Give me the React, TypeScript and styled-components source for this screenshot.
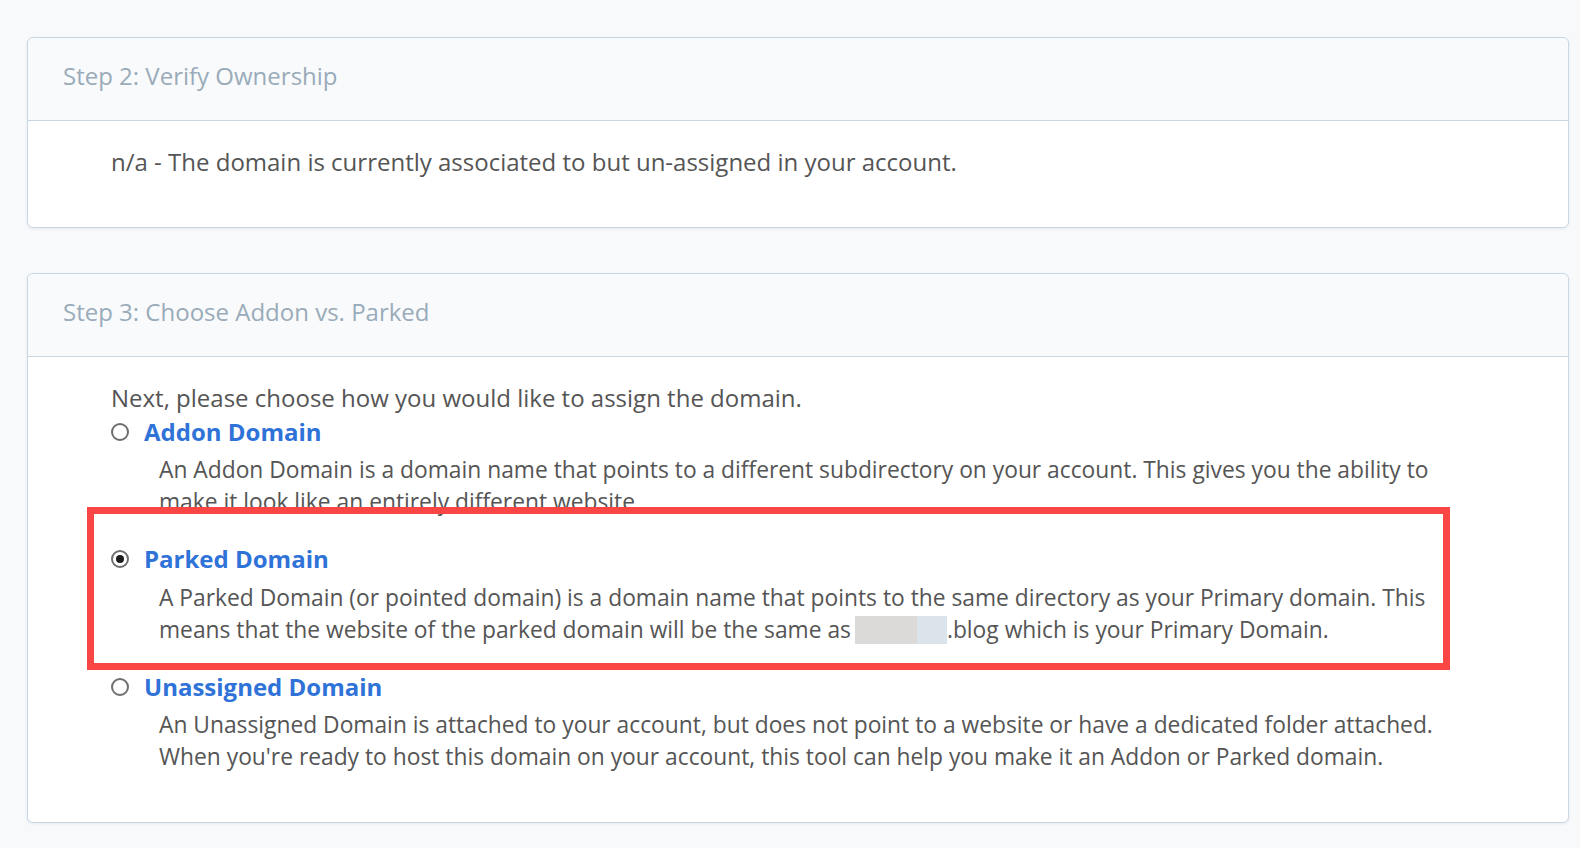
import React from 'react'
import styled, { createGlobalStyle } from 'styled-components'

const GlobalStyle = createGlobalStyle`
  html, body {
    margin: 0;
    padding: 0;
    background: #f7f9fb;
  }
  body {
    font-family: 'Open Sans', 'Liberation Sans', sans-serif;
    color: #555555;
  }
`

const Page = styled('div')`
  padding: 37px 11px 27px 27px;
`

const Card = styled('section')`
  background: #ffffff;
  border: 1px solid #c9d6e3;
  border-radius: 6px;
  box-shadow: 0 1px 3px rgba(40, 70, 110, 0.08);
  & + & {
    margin-top: 45px;
  }
`

const CardHeader = styled('header')`
  background: #f8fafc;
  border-bottom: 1px solid #c9d6e3;
  border-radius: 6px 6px 0 0;
  padding: 22px 35px 28px;
  font-size: 24px;
  line-height: 32px;
  color: #9aabb9;
`

const CardBody = styled('div')`
  padding: 25px 103px 49px 83px;
  font-size: 24px;
  line-height: 32px;
  color: #555555;
`

const Intro = styled('p')`
  margin: 0;
`

const OptionList = styled('div')`
  display: flex;
  flex-direction: column;
  gap: 25px;
  margin-top: 2px;
`

const Option = styled('div')`
  position: relative;
`

const OptionLabel = styled('label')`
  display: flex;
  align-items: center;
  gap: 15px;
  cursor: pointer;
`

const Radio = styled('span')<{ $checked?: boolean }>`
  position: relative;
  flex: none;
  width: 18px;
  height: 18px;
  box-sizing: border-box;
  border: 2px solid #6e6e6e;
  border-radius: 50%;
  background: #ffffff;
  margin-top: -1px;
  &::after {
    content: '';
    display: ${(p) => (p.$checked ? 'block' : 'none')};
    position: absolute;
    left: 50%;
    top: 50%;
    width: 8px;
    height: 8px;
    margin: -4px 0 0 -4px;
    border-radius: 50%;
    background: #1c1c1c;
  }
`

const OptionTitle = styled('span')`
  font-weight: 700;
  color: #2f72d8;
`

const Description = styled('p')<{ $gap: number }>`
  margin: ${(p) => p.$gap}px 0 0;
  padding-left: 48px;
  font-size: 22.8px;
  line-height: 32px;
`

const Redacted = styled('span')`
  display: inline-block;
  vertical-align: -6px;
  width: 92px;
  height: 28px;
  margin-left: 4px;
  background: linear-gradient(to right, #dcdad8 0 62px, #dce4eb 62px 100%);
`

// annotation frame drawn over the selected option
const Highlight = styled('div')`
  position: absolute;
  left: -24px;
  right: 15px;
  top: -36px;
  bottom: -24px;
  border: 7px solid #fa4545;
  pointer-events: none;
  z-index: 2;
`

type DomainOption = {
  title: string
  description: React.ReactNode
  checked?: boolean
}

const options: DomainOption[] = [
  {
    title: 'Addon Domain',
    description:
      'An Addon Domain is a domain name that points to a different subdirectory on your account. This gives you the ability to make it look like an entirely different website.',
  },
  {
    title: 'Parked Domain',
    checked: true,
    description: (
      <>
        A Parked Domain (or pointed domain) is a domain name that points to the same directory as your
        Primary domain. This means that the website of the parked domain will be the same as
        <Redacted />
        .blog which is your Primary Domain.
      </>
    ),
  },
  {
    title: 'Unassigned Domain',
    description:
      "An Unassigned Domain is attached to your account, but does not point to a website or have a dedicated folder attached. When you're ready to host this domain on your account, this tool can help you make it an Addon or Parked domain.",
  },
]

export default function App() {
  return (
    <>
      <GlobalStyle />
      <Page>
        <Card>
          <CardHeader>Step 2: Verify Ownership</CardHeader>
          <CardBody>
            <Intro>n/a - The domain is currently associated to but un-assigned in your account.</Intro>
          </CardBody>
        </Card>
        <Card>
          <CardHeader>Step 3: Choose Addon vs. Parked</CardHeader>
          <CardBody>
            <Intro>Next, please choose how you would like to assign the domain.</Intro>
            <OptionList>
              {options.map((o) => (
                <Option key={o.title}>
                  <OptionLabel>
                    <Radio $checked={o.checked} />
                    <OptionTitle>{o.title}</OptionTitle>
                  </OptionLabel>
                  <Description $gap={o.checked ? 7 : 6}>{o.description}</Description>
                  {o.checked && <Highlight />}
                </Option>
              ))}
            </OptionList>
          </CardBody>
        </Card>
      </Page>
    </>
  )
}
